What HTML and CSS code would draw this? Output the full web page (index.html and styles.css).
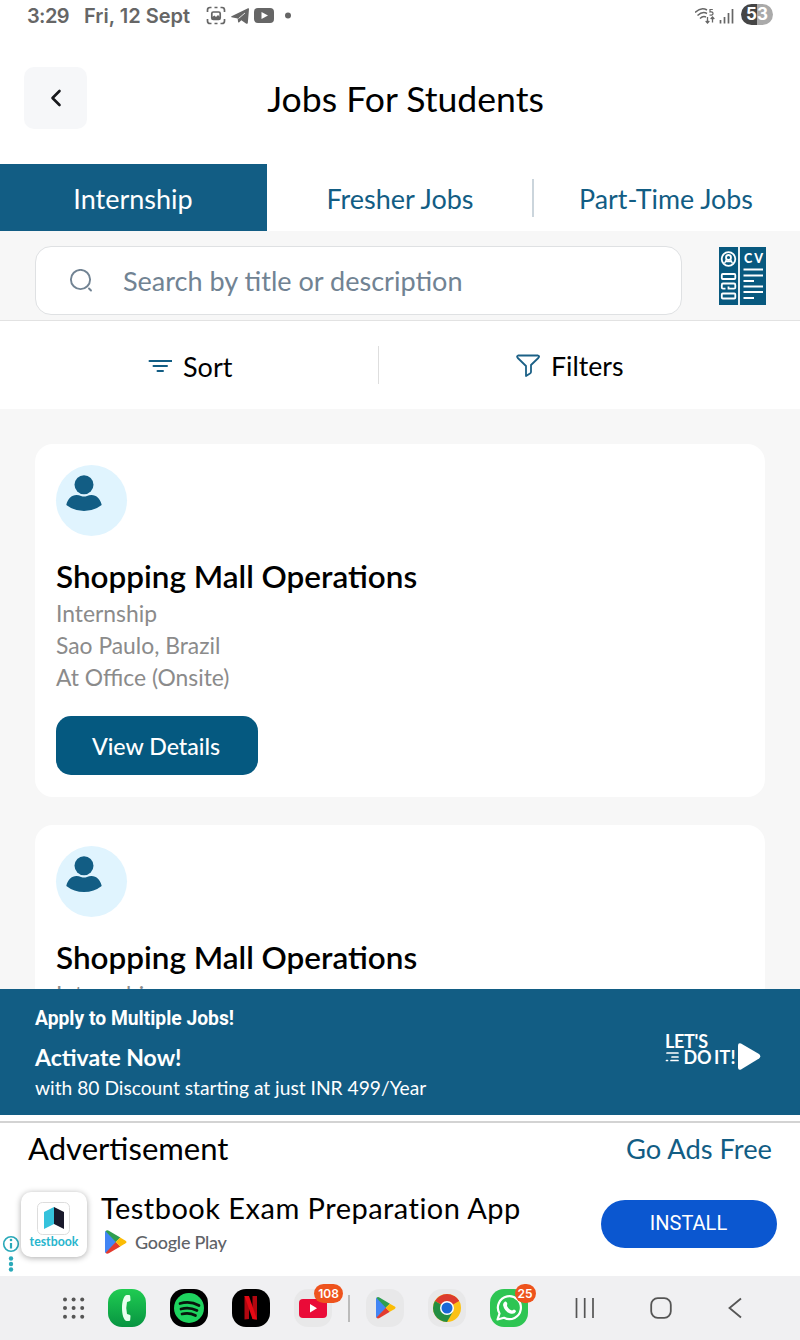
FILE: index.html
```html
<!DOCTYPE html>
<html lang="en">
<head>
<meta charset="utf-8">
<title>Jobs For Students</title>
<link rel="stylesheet" href="styles.css">
</head>
<body>
<svg width="0" height="0" class="defs">
  <symbol id="play" viewBox="0 0 22 24">
    <path d="M1 .7 11.5 12 1 23.3Q0 23 0 21.500V2.500Q0 1 1 .7Z" fill="#4285f4"/>
    <path d="M.6 1.200Q1.800-.4 3.800.7L15.300 7.600 10.800 12Z" fill="#2e9e4f"/>
    <path d="M.6 22.800Q1.800 24.400 3.800 23.300L15.300 16.400 10.800 12Z" fill="#e33b2e"/>
    <path d="M15.200 7.500 20.600 10.700Q22.400 12 20.600 13.300L15.200 16.500 10.700 12Z" fill="#fbbc04"/>
  </symbol>
  <symbol id="person" viewBox="0 0 36 37">
    <circle cx="18" cy="9.700" r="9.500"/>
    <path d="M.3 30C1.500 24 5.500 20 10.500 20Q13 20 15 21Q18 22 21 21Q23 20 25.500 20C30.500 20 34.500 24 35.700 30Q28 36 18 36T.3 30Z"/>
  </symbol>
</svg>
<div class="screen">
  <div class="status">
    <span class="time">3:29</span><span class="date">Fri, 12 Sept</span>
    <svg class="status-icons" width="88" height="22" viewBox="0 0 88 22" fill="none" stroke="#666" stroke-width="1.700">
      <path d="M1.500 7V5Q1.500 2.500 4 2.500H5.500M8.500 2.500H11.500M14.500 2.500H16Q18.500 2.500 18.500 5V7M1.500 14V16Q1.500 18.500 4 18.500H5.500M8.500 18.500H11.500M14.500 18.500H16Q18.500 18.500 18.500 16V14"/>
      <rect x="5.800" y="7" width="8.400" height="7.500" rx="1.500"/><path d="M6 14V12L8.500 10.500 10 12 12 10 14 12V14Z" fill="#666" stroke="none"/>
      <g fill="#666" stroke="none"><path d="M25.500 11.200 42 3.200Q43.200 3 43 4L41.800 18Q41.200 19.300 40 18.600L35.300 15.300 33 17.500Q32 17.800 32 16.500L31.700 13.600 25.500 12.200Q24.700 11.700 25.500 11.200Z"/><rect x="48" y="3" width="20" height="15" rx="4"/><circle cx="82" cy="10.500" r="3"/></g>
      <path d="M32.500 13.500 39 8" stroke="#fff" stroke-width=".8"/>
      <path d="M55.500 7 62 10.500 55.500 14Z" fill="#fff" stroke="none"/>
    </svg>
    <span class="grow"></span>
    <svg class="signal" width="40" height="20" viewBox="0 0 40 20" fill="none" stroke="#666" stroke-width="1.500">
      <path d="M0 6.500Q6 .5 12 4M2.500 9.500Q7.500 5 12 7.500M5 12.500Q8 9.500 11 11"/>
      <path d="M17.800 3.500H15V6Q18 5.500 18 7.500T14.500 9" stroke-width="1.200"/>
      <path d="M12.500 11V17M10.700 15 12.500 17 14.300 15M17.500 16.500V11M15.700 13 17.500 11 19.300 13" stroke-width="1.300"/>
      <path d="M25.500 14V17.500M29.500 11V17.500M33.500 7V17.500M37.500 3V17.500" stroke-width="1.700"/>
    </svg>
    <span class="battery">53</span>
  </div>

  <div class="header">
    <div class="back"><svg width="12" height="18" viewBox="0 0 12 18" fill="none" stroke="#17181c" stroke-width="2.600" stroke-linecap="round" stroke-linejoin="round"><path d="M9.500 2 2.500 9 9.500 16"/></svg></div>
    <h1 class="title">Jobs For Students</h1>
  </div>

  <div class="tabs">
    <div class="tab tab-active">Internship</div>
    <div class="tab">Fresher Jobs</div>
    <div class="tab tab-divided">Part-Time Jobs</div>
  </div>

  <div class="search-row">
    <div class="search">
      <svg width="24" height="24" viewBox="0 0 24 24" fill="none" stroke="#718393" stroke-width="1.900" stroke-linecap="round"><circle cx="11.500" cy="10.500" r="9.600"/><path d="M20 19.500 22 21.500"/></svg>
      <span>Search by title or description</span>
    </div>
    <svg class="cv" width="47" height="58" viewBox="0 0 47 58">
      <path d="M0 0H47V58H0Z" fill="#08597f"/><path d="M20 0V58" stroke="#fff" stroke-width="1.800"/>
      <g fill="none" stroke="#fff" stroke-width="1.800"><circle cx="9.500" cy="12" r="6.800"/><circle cx="9.500" cy="10.500" r="2.500"/><path d="M5.500 16.500 7.500 12.500M13.500 16.500 11.500 12.500M6.500 14.500H12.500" stroke-width="1.500"/>
      <rect x="2.800" y="27" width="13.500" height="5" rx="1"/><path d="M7 36.500H4Q2.800 36.500 2.800 38V40.500Q2.800 41.700 4 41.700H6.500M6.500 36.500H15Q16.300 36.500 16.300 38V40.500Q16.300 41.700 15 41.700H9.500V39.500"/><rect x="2.800" y="46.500" width="13.500" height="5" rx="1"/>
      <path d="M24.500 22.500H44M24.500 28.500H44M24.500 34H35M24.500 39.500H44M24.500 45H44M24.500 51H35" stroke-width="1.900"/></g>
      <text x="25" y="16.300" class="cv-text">CV</text>
    </svg>
  </div>

  <div class="controls">
    <div class="control sort"><svg width="24" height="14" viewBox="0 0 24 14" stroke="#125d84" stroke-width="2" stroke-linecap="round"><path d="M1.500 2H23.500M5.500 7H19M9.500 12H15"/></svg><span>Sort</span></div>
    <div class="control filters"><svg width="24" height="24" viewBox="0 0 24 24" fill="none" stroke="#1b6086" stroke-width="1.800" stroke-linejoin="round"><path d="M2 1.500H22Q24 2 22.300 4L15 11V18Q15 19 14 19.500L10 22V12L1.800 4Q.3 2 2 1.500Z"/></svg><span>Filters</span></div>
  </div>

  <div class="list">
    <div class="card">
      <div class="avatar"><svg width="36" height="37" fill="#125d84"><use href="#person"/></svg></div>
      <h2>Shopping Mall Operations</h2>
      <p>Internship</p><p>Sao Paulo, Brazil</p><p>At Office (Onsite)</p>
      <div class="details">View Details</div>
    </div>
    <div class="card">
      <div class="avatar"><svg width="36" height="37" fill="#125d84"><use href="#person"/></svg></div>
      <h2>Shopping Mall Operations</h2>
      <p>Internship</p>
    </div>
  </div>

  <div class="banner">
    <div class="banner-copy">
      <div class="apply">Apply to Multiple Jobs!</div>
      <div class="activate">Activate Now!</div>
      <div class="offer">with 80 Discount starting at just INR 499/Year</div>
    </div>
    <svg width="96" height="40" viewBox="0 0 96 40" fill="#fff" class="doit">
      <text x="0" y="15.500" textLength="43">LET'S</text>
      <text x="18.500" y="31.500" textLength="28">DO</text>
      <text x="49" y="31.500" textLength="21.500">IT!</text>
      <path d="M2 21H13M7 25H13M1.500 28.500H2.500M6 28.500H13" stroke="#fff" stroke-width="1.700" stroke-linecap="round"/>
      <path d="M76 11.500 94 22Q96.500 24.200 94 26.500L76 37.500Q73 38.500 73 35.500V13.500Q73 10.500 76 11.500Z"/>
    </svg>
  </div>

  <div class="ad">
    <div class="ad-head"><span class="ad-title">Advertisement</span><span class="ad-free">Go Ads Free</span></div>
    <div class="ad-body">
      <svg class="info" width="18" height="38" viewBox="0 0 18 38"><circle cx="9" cy="9" r="7.300" fill="#fff" stroke="#2aa9b9" stroke-width="1.600"/><path d="M9 8V13.500" stroke="#2aa9b9" stroke-width="2.200"/><circle cx="9" cy="5" r="1.300" fill="#2aa9b9"/><g fill="#2aa9b9"><circle cx="9" cy="23.500" r="2.200"/><circle cx="9" cy="29" r="2.200"/><circle cx="9" cy="34.500" r="2.200"/></g></svg>
      <div class="app-icon">
        <svg width="34" height="34" viewBox="0 0 34 34"><rect x=".5" y=".5" width="32" height="32" rx="5" fill="#fff" stroke="#ddd"/><path d="M7 10 17 5V22L7 27Z" fill="#35c2dc"/><path d="M17 5 27 10V27L17 22Z" fill="#19192b"/></svg>
        <span>testbook</span>
      </div>
      <div class="app-copy">
        <div class="app-name">Testbook Exam Preparation App</div>
        <div class="store"><svg width="22" height="24"><use href="#play"/></svg><span>Google Play</span></div>
      </div>
      <div class="install">INSTALL</div>
    </div>
  </div>

  <div class="dock">
    <svg class="grid-icon" width="24" height="24" viewBox="0 0 24 24" fill="#555"><circle cx="3" cy="3.500" r="2"/><circle cx="11.600" cy="3.500" r="2"/><circle cx="20.200" cy="3.500" r="2"/><circle cx="3" cy="12.100" r="2"/><circle cx="11.600" cy="12.100" r="2"/><circle cx="20.200" cy="12.100" r="2"/><circle cx="3" cy="20.700" r="2"/><circle cx="11.600" cy="20.700" r="2"/><circle cx="20.200" cy="20.700" r="2"/></svg>
    <div class="app phone"><svg width="38" height="38" viewBox="0 0 38 38"><path d="M18.500 6H21Q22 6 22.200 7L22.500 11Q22.500 12 21.500 12.300L19 13Q17.500 19 19 25L21.500 25.700Q22.500 26 22.500 27L22.200 31Q22 32 21 32H18.500C15.500 31 14 25 14 19S15.500 7 18.500 6Z" fill="#e9fff0"/></svg></div>
    <div class="app black"><svg width="38" height="38" viewBox="0 0 38 38"><circle cx="19" cy="19" r="15" fill="#1ed35f"/><path d="M10 14.500Q20 11.500 29 16.500M11 20Q19 17.500 27 21.500M12 25Q19 23 25.500 26.500" fill="none" stroke="#08150c" stroke-width="2.700" stroke-linecap="round"/></svg></div>
    <div class="app black"><svg width="38" height="38" viewBox="0 0 38 38"><path d="M12.500 7H17V30L12.500 30.500ZM20.500 7H25V30.500L20.500 30Z" fill="#b20710"/><path d="M12.500 7H17L25 30.500 20.500 30Z" fill="#e50914"/></svg></div>
    <div class="app light"><svg width="38" height="38" viewBox="0 0 38 38"><rect x="5" y="10" width="28" height="19" rx="4" fill="#ea0b38"/><path d="M16 15 23 19.300 16 23.500Z" fill="#fff"/></svg><span class="badge badge-wide">108</span></div>
    <div class="separator"></div>
    <div class="app light"><svg width="38" height="38" viewBox="0 0 38 38"><use href="#play" x="10" y="7.500" width="20" height="22.500"/></svg></div>
    <div class="app light"><svg width="38" height="38" viewBox="0 0 38 38"><circle cx="19" cy="19" r="14" fill="#fbc116"/><path d="M19 19 6.900 12A14 14 0 0 1 31.100 12Z" fill="#dc3b2d"/><path d="M19 19 6.900 12A14 14 0 0 0 19 33L25 22.500Z" fill="#238e42"/><path d="M19 12H31.100Q29 8.500 26 6.900H19Z" fill="#dc3b2d"/><circle cx="19" cy="19" r="7" fill="#fff"/><circle cx="19" cy="19" r="5.500" fill="#1a68d8"/></svg></div>
    <div class="app whatsapp"><svg width="38" height="38" viewBox="0 0 38 38" fill="none" stroke="#fff" stroke-width="2.200"><path d="M7.500 30.500 9.500 24.500A11.500 11.500 0 1 1 14 28.800Z" stroke-linejoin="round"/><path d="M15 12.500Q16.500 12 17.300 14.500L17 17Q18.500 20.500 22 21.500L24 20.500Q26 21 26 22.500 24.500 25.500 21 24.700 14.500 23 13 16 13 13.500 15 12.500Z" fill="#fff" stroke="none"/></svg><span class="badge">25</span></div>
    <div class="nav-buttons">
      <svg width="22" height="22" viewBox="0 0 22 22" stroke="#555" stroke-width="1.700"><path d="M2.500 1V21M10.700 1V21M19 1V21"/></svg>
      <svg width="22" height="22" viewBox="0 0 22 22" fill="none" stroke="#555" stroke-width="1.800"><rect x="1.200" y="1.200" width="19.600" height="19.600" rx="6.500"/></svg>
      <svg width="16" height="22" viewBox="0 0 16 22" fill="none" stroke="#555" stroke-width="1.800"><path d="M15 1.500 3.500 11 15 20.500"/></svg>
    </div>
  </div>
</div>
</body>
</html>
```
FILE: styles.css
```css
* { box-sizing: border-box; margin: 0; padding: 0; }
body { background: #fff; font-family: Lato, sans-serif; color: #000; }
svg { display: block; flex: none; }
.defs { position: absolute; }
.screen { width: 800px; height: 1340px; display: flex; flex-direction: column; overflow: hidden; white-space: nowrap; }
.screen > div { flex: none; }

.status { height: 40px; padding: 0 27px; display: flex; align-items: flex-start; color: #666; font: 600 20px/32px Inter, sans-serif; }
.time { width: 57px; letter-spacing: -.6px; }
.date { width: 122px; }
.status-icons { margin-top: 5px; }
.grow { flex: 1; }
.signal { margin: 6px 6px 0 0; }
.battery { width: 32px; height: 21px; margin-top: 4px; border-radius: 11px; background: linear-gradient(90deg, #454545 50%, #aaa 50%); color: #fff; text-align: center; font: 700 17px/21px Inter, sans-serif; }

.header { height: 124px; padding: 27px 24px 0; display: flex; }
.back { width: 63px; height: 62px; border-radius: 10px; background: #f6f7f9; display: flex; align-items: center; justify-content: center; }
.title { flex: 1; padding-right: 52px; text-align: center; font-weight: 400; font-size: 35.600px; line-height: 64px; }

.tabs { height: 67px; display: grid; grid-template-columns: 267px 266px 267px; }
.tab { color: #125d84; font-size: 27px; line-height: 70px; text-align: center; }
.tab-active { background: #125d84; color: #fff; padding-right: 1px; }
.tab-divided { margin-left: -1px; font-size: 26.800px; background: linear-gradient(#cbd5dc, #cbd5dc) 0 15px / 2px 38px no-repeat; }

.search-row { height: 90px; padding: 15px 34px 0 35px; display: flex; justify-content: space-between; background: #f7f7f7; border-bottom: 1px solid #e2e2e2; }
.search { width: 647px; height: 69px; border: 1px solid #dfe1e3; border-radius: 16px; background: #fff; display: flex; align-items: center; gap: 30px; padding-left: 33px; color: #718393; font-size: 27.050px; line-height: 68px; }
.cv { margin-top: 1px; }
.cv-text { font: 900 12.500px Lato, sans-serif; letter-spacing: 2px; fill: #fff; }

.controls { height: 88px; display: grid; grid-template-columns: 379px 421px; }
.control { display: flex; align-items: center; font-size: 27px; line-height: 89px; }
.sort { padding-left: 148px; gap: 11px; background: linear-gradient(#dedede, #dedede) 100% 25px / 1.500px 38px no-repeat; }
.control svg { margin-bottom: 2px; }
.filters { padding-left: 137px; gap: 11px; font-size: 26.700px; line-height: 91px; }

.list { height: 580px; padding: 35px 35px 0; background: #f7f7f7; overflow: hidden; display: flex; flex-direction: column; gap: 28px; }
.card { height: 353px; flex: none; padding: 21px; border-radius: 18px; background: #fff; }
.avatar { width: 71px; height: 71px; border-radius: 50%; background: #e0f4fe; padding: 10px; }
.card h2 { margin-top: 21px; font-size: 31.450px; font-weight: 600; line-height: 38px; }
.card p { color: #8b8b8b; font-size: 22.850px; line-height: 32px; }
.card h2 + p { margin-top: 2px; }
.details { margin-top: 23px; width: 202px; height: 59px; border-radius: 15px; background: #055980; color: #fff; font-size: 23.200px; line-height: 61px; font-weight: 500; text-align: center; padding-right: 2px; }

.banner { height: 126px; background: #125d84; color: #fff; padding: 0 39px 0 35px; display: flex; justify-content: space-between; }
.banner-copy { padding-top: 17px; }
.apply { font: 700 19.300px/25px Roboto, sans-serif; }
.activate { margin-top: 11px; font-size: 23px; line-height: 30px; font-weight: 700; }
.offer { margin-top: 1px; font-size: 19.220px; line-height: 30px; }
.doit { margin-top: 43px; font: 700 18px Lato, sans-serif; }

.ad { height: 161px; padding-top: 6px; }
.ad-head { height: 57px; border-top: 2px solid #d3d3d3; padding: 0 28px; display: flex; justify-content: space-between; }
.ad-title { font-size: 31.050px; line-height: 51px; }
.ad-free { font-size: 27.300px; line-height: 52px; color: #125d84; }
.ad-body { display: flex; align-items: flex-start; }
.info { margin: 57px 0 0 2px; }
.app-icon { margin: 14px 0 0 1px; width: 66px; height: 65px; border-radius: 10px; background: #fff; box-shadow: 0 1px 6px #0005; padding: 10px 0 0; display: flex; flex-direction: column; align-items: center; color: #28b5cd; font: 700 12.300px/12px Lato, sans-serif; }
.app-copy { margin: 10px 0 0 14px; width: 500px; }
.app-name { font: 400 29px/40px Lato, sans-serif; letter-spacing: .47px; }
.store { display: flex; align-items: center; gap: 8px; margin-top: 1px; padding-left: 4px; font: 500 18px/26px Lato, sans-serif; letter-spacing: -.25px; color: #5f6368; }
.install { width: 176px; height: 48px; margin-top: 22px; border-radius: 24px; background: #0b57d0; color: #fff; text-align: center; font: 400 20px/47px Roboto, sans-serif; padding-right: 1px; }

.dock { height: 64px; background: #f0f0f2; padding: 13px 0 0 62px; display: flex; }
.grid-icon { margin: 7px 22px 0 0; }
.app { position: relative; width: 38px; height: 38px; margin-right: 24px; border-radius: 14px; }
.phone { background: linear-gradient(#20cc52, #079441); }
.black { background: #000; }
.light { background: #e8e8e9; }
.whatsapp { background: #2ec553; margin-right: 0; }
.separator { width: 1.500px; height: 27px; background: #bbb; margin: 6px 16px 0 -8px; }
.badge { position: absolute; top: -5px; left: 25px; width: 21px; height: 19px; border-radius: 10px; background: #ee531d; color: #fff; text-align: center; font: 600 12px/19px Inter, sans-serif; }
.badge-wide { left: 20px; width: 29px; }
.nav-buttons { display: flex; justify-content: space-between; width: 168px; margin: 8px 0 0 46px; }
```
